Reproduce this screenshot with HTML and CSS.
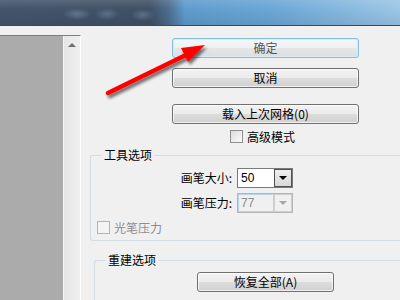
FILE: index.html
```html
<!DOCTYPE html>
<html lang="zh-CN">
  <head>
    <meta charset="UTF-8">
    <title>网格选项</title>
    <link rel="stylesheet" href="styles.css">
  </head>
  <body>
    <div class="titlebar"></div>
    <div class="main">
      <div class="preview">
        <div class="canvas"></div>
        <div class="scrollbar"><span class="arrow-up"></span></div>
      </div>
      <div class="controls">
        <div class="buttons">
          <button class="btn btn-default">确定</button>
          <button class="btn btn-cancel">取消</button>
          <button class="btn btn-load">载入上次网格(0)</button>
          <div class="check-row advanced"><span class="check"></span>高级模式</div>
        </div>
        <fieldset class="group tools">
          <legend>工具选项</legend>
          <div class="field">
            <span class="field-label">画笔大小:</span>
            <span class="combo"><span class="combo-value">50</span><span class="combo-btn"></span></span>
          </div>
          <div class="field">
            <span class="field-label">画笔压力:</span>
            <span class="combo disabled"><span class="combo-value">77</span><span class="combo-btn"></span></span>
          </div>
          <div class="check-row pen disabled"><span class="check"></span>光笔压力</div>
        </fieldset>
        <fieldset class="group rebuild">
          <legend>重建选项</legend>
          <button class="btn btn-restore">恢复全部(A)</button>
        </fieldset>
      </div>
    </div>
    <!-- 标注箭头 -->
    <svg class="annotation" width="400" height="300" viewBox="0 0 400 300">
      <defs>
        <filter id="shadow" x="-20%" y="-20%" width="140%" height="140%">
          <feDropShadow dx="2" dy="3" stdDeviation="1.8" flood-color="#000" flood-opacity="0.55"/>
        </filter>
      </defs>
      <g filter="url(#shadow)">
        <line x1="108" y1="93" x2="188" y2="54" stroke="#ff0000" stroke-width="4.5" stroke-linecap="round"/>
        <polygon points="205,45 181,48 188,62" fill="#ff0000"/>
      </g>
    </svg>
  </body>
</html>
```

FILE: styles.css
```css
body { margin: 0; width: 400px; height: 300px; overflow: hidden; background: #f0f0f0; font: 12px/16px "Noto Sans CJK SC", "Liberation Sans", sans-serif; color: #000; position: relative; }

.titlebar {
  height: 25px;
  border-bottom: 1px solid #3b4856;
  background:
    radial-gradient(ellipse 14px 6px at 77px 14px, rgba(140,160,185,.45), transparent),
    radial-gradient(ellipse 12px 6px at 107px 14px, rgba(140,160,185,.4), transparent),
    radial-gradient(ellipse 12px 6px at 143px 15px, rgba(140,160,185,.4), transparent),
    linear-gradient(180deg, rgba(255,255,255,.12) 0, rgba(255,255,255,0) 9px, rgba(0,0,0,.08) 25px),
    linear-gradient(90deg, #44566b 0, #3f5166 150px, #4d6c8c 168px, #5e9bcd 185px, #6aa6d6 270px, #9cc6e6 400px);
}

.main { display: flex; }

.preview { display: flex; margin-top: 9px; height: 265px; border-top: 1px solid #7c7c7c; border-right: 1px solid #fff; }
.canvas { width: 63px; background: #ababab; }
.scrollbar { width: 16px; border-left: 1px solid #f6f6f6; background: linear-gradient(90deg, #e6e6e6, #efefef); display: flex; justify-content: center; }
.arrow-up { width: 0; height: 0; margin-top: 7px; border-left: 4px solid transparent; border-right: 4px solid transparent; border-bottom: 4px solid #6f6f6f; }

.controls { flex: 1; margin-left: 9px; display: flex; flex-direction: column; }

.buttons { display: flex; flex-direction: column; margin-left: 82px; width: 187px; margin-top: 12px; }

.btn { display: block; height: 20px; padding: 0; border: 1px solid #707070; border-radius: 3px; font: 12px/16px "Noto Sans CJK SC", "Liberation Sans", sans-serif; color: #000; background: linear-gradient(180deg, #f3f3f3 0, #ebebeb 50%, #dddddd 50%, #d0d0d0 100%); box-shadow: inset 0 0 0 1px rgba(255,255,255,.7); }
.btn-default { border-color: #7fc0df; color: #555; background: linear-gradient(180deg, #f5f6f7 0, #eef0f1 50%, #e4e6e7 50%, #dcdfe0 100%); box-shadow: inset 0 0 0 1px #d6ecf6; }
.btn-cancel { margin-top: 10px; }
.btn-load { margin-top: 16px; }

.check-row { display: flex; align-items: center; height: 15px; }
.check-row .check { width: 11px; height: 11px; border: 1px solid #8e8f8f; background: linear-gradient(135deg, #dcdcdc, #fbfbfb); margin-right: 4px; }
.check-row.disabled { color: #8d8d8d; }
.check-row.disabled .check { border-color: #b4b4b4; background: #f4f4f4; }
.advanced { margin: 5px 0 0 58px; }

/* 分组框延伸出右边缘，不画右边框 */
.group { margin: 0; padding: 0; min-width: 0; border: 1px solid #d3dce3; border-right: 0; border-radius: 3px 0 0 3px; }
.group legend { padding: 0 2px; margin-left: 11px; line-height: 16px; }
.tools { margin-top: 3px; padding-bottom: 5px; }
.rebuild { margin: 11px 0 0 4px; height: 60px; }

.field { display: flex; align-items: center; margin-top: 5px; padding-left: 79px; }
.field-label { width: 62px; text-align: right; }

.combo { display: flex; width: 54px; height: 18px; margin-left: 5px; border: 1px solid #7a7a7a; background: #fff; }
.combo-value { flex: 1; padding-left: 3px; font: 12px/18px "Liberation Sans", sans-serif; }
.combo-btn { width: 16px; height: 16px; border: 1px solid #505050; background: linear-gradient(180deg, #efefef, #d8d8d8); display: flex; align-items: center; justify-content: center; }
.combo-btn::after { content: ""; border-left: 4px solid transparent; border-right: 4px solid transparent; border-top: 4px solid #000; }
.combo.disabled { border-color: #b5b5b5; background: #f0f0f0; }
.combo.disabled .combo-value { color: #8d8d8d; box-shadow: inset 0 0 0 1px #b7d2ec; }
.combo.disabled .combo-btn { border-color: #cfcfcf; background: #f0f0f0; }
.combo.disabled .combo-btn::after { border-top-color: #a8a8a8; }

.pen { margin: 7px 0 0 6px; }

.btn-restore { width: 137px; margin: 4px 0 0 102px; }

.annotation { position: absolute; top: 0; left: 0; pointer-events: none; }
```
